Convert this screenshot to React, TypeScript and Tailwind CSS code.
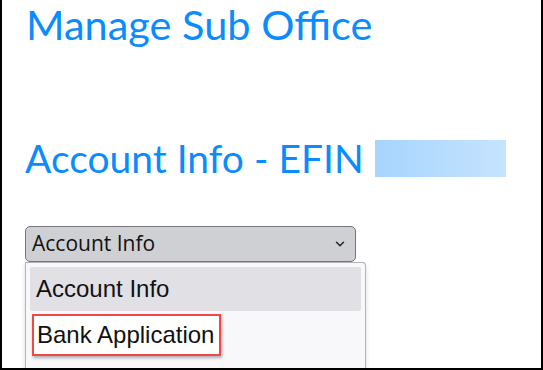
import { ChevronDown } from "lucide-react";

const options = ["Account Info", "Bank Application"];

export default function App() {
  return (
    <div className="w-[543px] h-[370px] overflow-hidden bg-white border-l-2 border-r-2 border-b-2 border-black">
      <div className="pl-[23px] pr-4">
        <h1
          className="ml-[1px] text-[41.5px] leading-[48px] text-[#0a8cff] font-normal"
          style={{ fontFamily: "Lato, 'Noto Sans', sans-serif" }}
        >
          Manage Sub Office
        </h1>

        <h2
          className="mt-[86px] flex items-center gap-[11px] text-[39px] leading-[48px] text-[#0a8cff] font-normal"
          style={{ fontFamily: "Lato, 'Noto Sans', sans-serif" }}
        >
          <span>Account Info - EFIN</span>
          <span className="inline-block w-[131px] h-[37px] bg-gradient-to-r from-[#a6d4fd] to-[#c6e4fd]" />
        </h2>

        <div className="mt-[44px] w-[341px]" style={{ fontFamily: "'Liberation Sans', Arial, sans-serif" }}>
          {/* closed select */}
          <div
            className="w-[331px] h-[36px] flex items-center justify-between pl-[6px] pr-[8px] bg-[#cfd0d4] border border-[#76767a] rounded-[5px] text-[21px] text-[#111]"
            style={{ fontFamily: "'Open Sans', 'Noto Sans', sans-serif" }}
          >
            <span>Account Info</span>
            <ChevronDown size={14} strokeWidth={2.5} className="text-[#222]" />
          </div>

          {/* open list */}
          <div className="h-[120px] border border-b-0 border-[#b4b4b8] rounded-tr-[4px] bg-[#f8f8fa] px-[4px] pt-[4px] shadow-[0_2px_4px_rgba(0,0,0,0.15)]">
            <div className="h-[44px] flex items-center pl-[6px] bg-[#e1e0e5] rounded-[2px] text-[24px] text-[#111]">
              {options[0]}
            </div>
            <div className="mt-[3px] inline-flex h-[42px] items-center pl-[3px] pr-[5px] ml-[2px] border-2 border-[#f04848] bg-white text-[24px] text-[#111] shadow-[1px_2px_3px_rgba(0,0,0,0.3)]">
              {options[1]}
            </div>
          </div>
        </div>
      </div>
    </div>
  );
}
